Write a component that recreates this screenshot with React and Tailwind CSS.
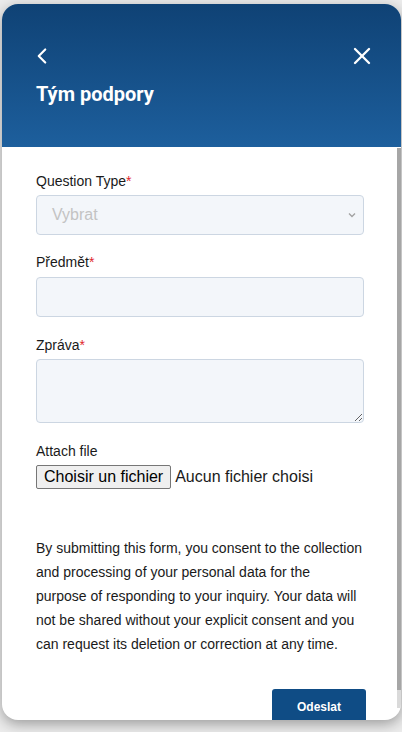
import React from 'react';
import { ChevronLeft, X } from 'lucide-react';

const Label = ({ text, required, className = '' }) => (
    <label className={`block text-[14px] leading-5 text-[#1a1a1a] ${className}`}>
        {text}
        {required && <span className="text-[#e0262b]">*</span>}
    </label>
);

const fieldClass = 'block w-full rounded-[4px] border border-[#ccd6e2] bg-[#f3f6fa] outline-none';

const App = () => {
    return (
        <div className="min-h-[732px] bg-[#ececec] pt-[4px] pl-[2px] pr-[1px] font-['Liberation_Sans',Arial,sans-serif]">
            <div className="relative h-[716px] w-[399px] overflow-hidden rounded-2xl bg-white shadow-[0_4px_14px_rgba(0,0,0,0.35)]">
                {/* Header */}
                <div className="flex h-[143px] flex-col bg-linear-to-b from-[#0f4275] to-[#1d5f9d] px-[34px] pt-[39px] text-white">
                    <div className="flex h-[26px] items-center justify-between">
                        <button className="-ml-[7px] text-white">
                            <ChevronLeft size={26} strokeWidth={2} />
                        </button>
                        <button className="-mr-[9px] text-white">
                            <X size={28} strokeWidth={2} />
                        </button>
                    </div>
                    <h1 className="mt-[11px] font-['Roboto',sans-serif] text-[20px] leading-7 font-bold">
                        Tým podpory
                    </h1>
                </div>

                {/* Form body */}
                <div className="pl-[34px] pr-[37px] pt-6">
                    <Label text="Question Type" required className="mb-1" />
                    <div className={`${fieldClass} relative mb-[17px] flex h-10 items-center px-[15px]`}>
                        <span className="text-[16px] text-[#c3c3c3]">Vybrat</span>
                        <svg className="absolute right-[6px] top-[14px]" width="10" height="10" viewBox="0 0 10 10" fill="none">
                            <path d="M2 3.5 5 6.5 8 3.5" stroke="#a3a3a3" strokeWidth="1.4" />
                        </svg>
                    </div>

                    <Label text="Předmět" required className="mb-[5px]" />
                    <input className={`${fieldClass} mb-[18px] h-10 px-3`} />

                    <Label text="Zpráva" required className="mb-1" />
                    <textarea className={`${fieldClass} mb-[18px] h-16 px-3`} />

                    <Label text="Attach file" className="mb-1" />
                    <div className="flex h-6 items-center text-[16px] text-[#1a1a1a]">
                        <span className="flex h-6 items-center rounded-[2px] border border-[#767676] bg-[#efefef] px-[7px] leading-none text-black">
                            Choisir un fichier
                        </span>
                        <span className="ml-[4px]">Aucun fichier choisi</span>
                    </div>

                    <p className="mt-[47px] text-[14px] leading-6 text-[#1a1a1a]">
                        By submitting this form, you consent to the collection and processing of your personal data for the purpose of responding to your inquiry. Your data will not be shared without your explicit consent and you can request its deletion or correction at any time.
                    </p>

                    <div className="mt-[33px] flex justify-end">
                        <button className="-mr-[2px] h-9 w-[94px] rounded-[3px] bg-[#0f4c85] text-[12px] font-bold text-white">
                            Odeslat
                        </button>
                    </div>
                </div>

                {/* Scrollbar */}
                <div className="absolute right-0 top-[144px] h-[560px] w-[4px] bg-[#dadada]">
                    <div className="h-[542px] w-full bg-[#a6a6a6]" />
                </div>
            </div>
        </div>
    );
};

export default App;
